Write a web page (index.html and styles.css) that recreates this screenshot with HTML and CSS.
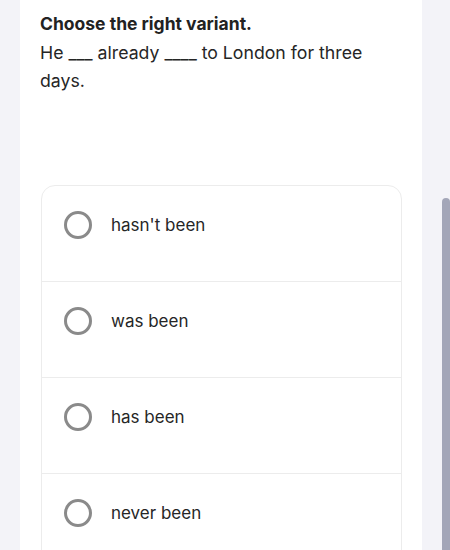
FILE: index.html
```html
<!DOCTYPE html>
<html lang="en">
<head>
  <meta charset="UTF-8">
  <meta name="viewport" content="width=device-width, initial-scale=1.0">
  <title>Quiz</title>
  <link rel="stylesheet" href="styles.css">
</head>
<body>

  <div class="panel">
    <h1 class="question-title">Choose the right variant.</h1>
    <p class="question-text">He ___ already ____ to London for three days.</p>

    <div class="options">
      <label class="option">
        <span class="radio"></span>
        <span class="option-text">hasn't been</span>
      </label>
      <label class="option">
        <span class="radio"></span>
        <span class="option-text">was been</span>
      </label>
      <label class="option">
        <span class="radio"></span>
        <span class="option-text">has been</span>
      </label>
      <label class="option">
        <span class="radio"></span>
        <span class="option-text">never been</span>
      </label>
    </div>
  </div>

  <div class="scroll-thumb"></div>

</body>
</html>
```

FILE: styles.css
```css
body {
  font-family: Inter, "Noto Sans", sans-serif;
  margin: 0;
  padding: 0;
  background-color: #f3f3f8;
  color: #2b2b2b;
  overflow: hidden;
}
.panel {
  margin-left: 20px;
  width: 362px;
  min-height: 550px;
  padding: 10px 20px 0 20px;
  background-color: white;
}
.question-title {
  margin: 0;
  font-size: 17.5px;
  font-weight: 700;
  line-height: 28px;
  color: #222;
}
.question-text {
  margin: 0;
  padding-top: 1px;
  font-size: 17.7px;
  line-height: 28px;
  color: #262626;
}
.options {
  margin: 90px 0 0 1px;
  border: 1px solid #ececec;
  border-radius: 14px;
}
.option {
  display: flex;
  align-items: center;
  height: 96px;
  padding: 0 0 18px 22px;
  box-sizing: border-box;
  border-bottom: 1px solid #ececec;
  cursor: pointer;
}
.option:last-child {
  border-bottom: none;
}
.radio {
  width: 28px;
  height: 28px;
  box-sizing: border-box;
  border: 3px solid #8a8a8a;
  border-radius: 50%;
  margin-right: 19px;
  flex-shrink: 0;
}
.option-text {
  font-size: 17px;
  color: #262626;
}
.scroll-thumb {
  position: absolute;
  top: 198px;
  right: 0;
  width: 8px;
  height: 360px;
  background-color: #a3a6b8;
  border-radius: 4px 4px 0 0;
}
```
